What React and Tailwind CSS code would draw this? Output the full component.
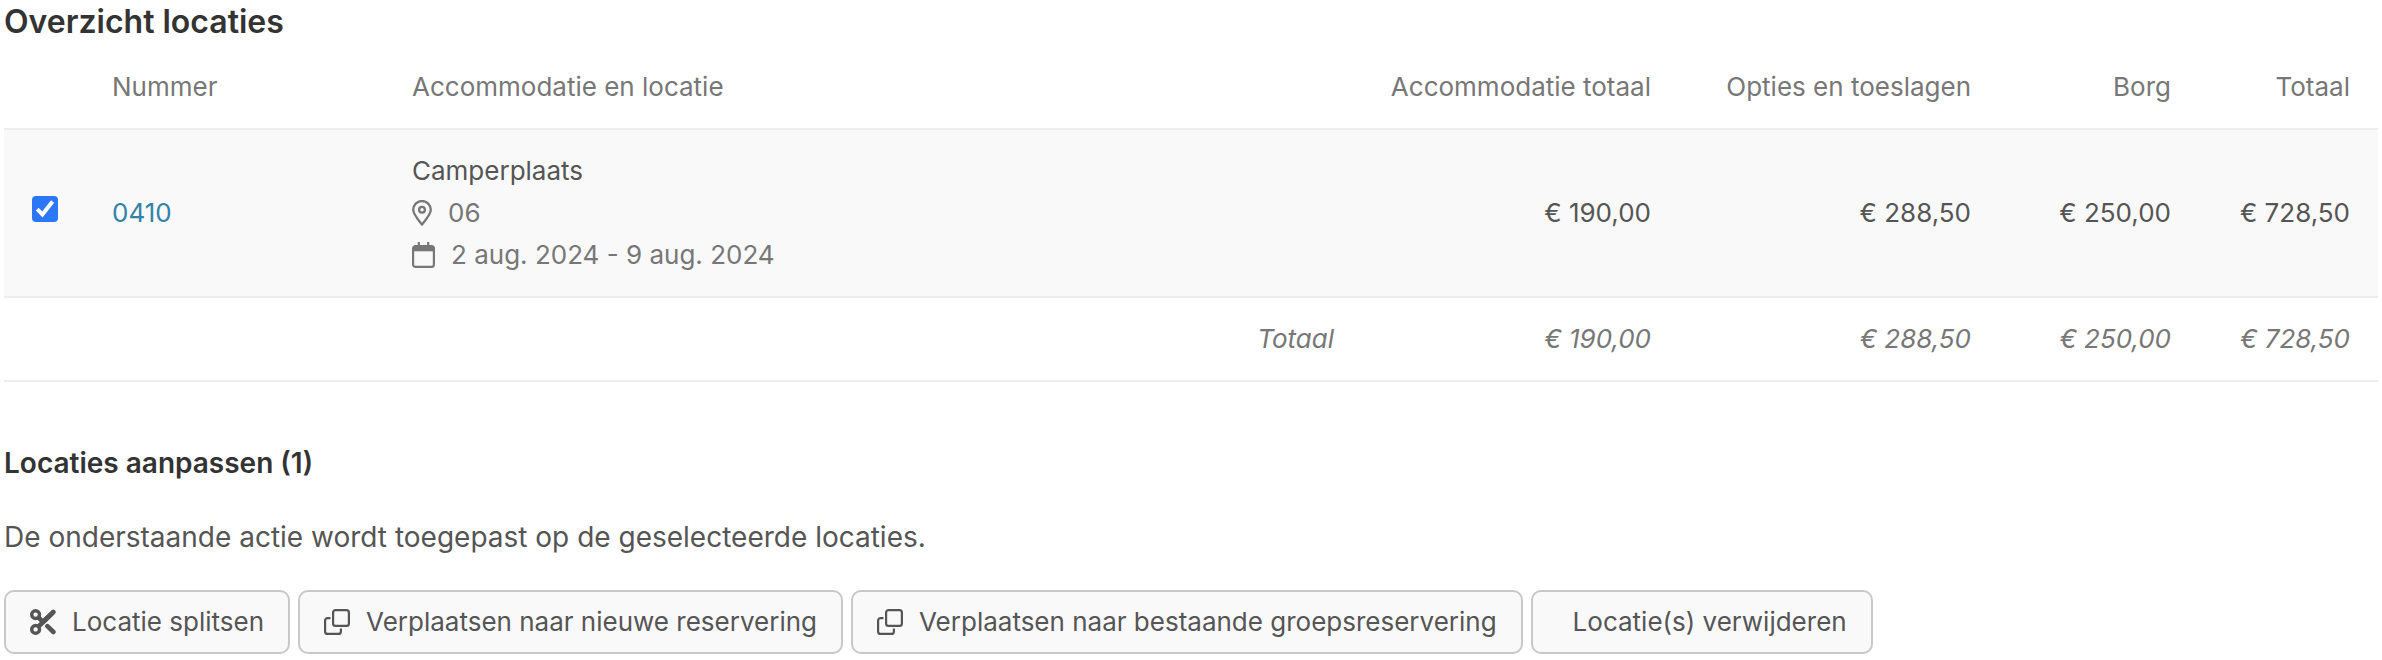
import React, { useState } from "react";

const amounts = ["€ 190,00", "€ 288,50", "€ 250,00", "€ 728,50"];

function ScissorsIcon() {
  return (
    <svg viewBox="0 0 26 26" className="size-[26px] shrink-0" fill="none" aria-hidden="true">
      <circle cx="5.6" cy="5.6" r="3.9" stroke="currentColor" strokeWidth="3.4" />
      <circle cx="5.6" cy="20.4" r="3.9" stroke="currentColor" strokeWidth="3.4" />
      <path d="M8.4 17.6 23.4 3M8.4 8.4l5 5" stroke="currentColor" strokeWidth="4.6" />
      <path d="M13 13 23.4 3M17.4 17.2l6 5.8" stroke="currentColor" strokeWidth="4.6" strokeLinecap="round" />
    </svg>
  );
}

function CloneIcon() {
  return (
    <svg viewBox="0 0 26 26" className="size-[26px] shrink-0" fill="none" stroke="currentColor" strokeWidth="2.2" aria-hidden="true">
      <rect x="9.1" y="1.1" width="15.8" height="15.8" rx="2.4" />
      <path d="M6.5 9.1H3.6a2.5 2.5 0 0 0-2.5 2.5v10.8a2.5 2.5 0 0 0 2.5 2.5h10.8a2.5 2.5 0 0 0 2.5-2.5V19.5" />
    </svg>
  );
}

function PinIcon() {
  return (
    <svg viewBox="0 0 20 26" className="h-[26px] w-5 shrink-0" fill="none" stroke="currentColor" strokeWidth="2.3" aria-hidden="true">
      <path d="M10 24.6C7.5 21.4 1.2 14.4 1.2 9.8a8.8 8.8 0 0 1 17.6 0c0 4.6-6.3 11.6-8.8 14.8Z" strokeLinejoin="round" />
      <circle cx="10" cy="9.8" r="2.9" />
    </svg>
  );
}

function CalendarIcon() {
  return (
    <svg viewBox="0 0 23 26" className="h-[26px] w-[23px] shrink-0" fill="none" stroke="currentColor" strokeWidth="2.2" aria-hidden="true">
      <rect x="1.1" y="4.1" width="20.8" height="20.8" rx="2.4" />
      <path d="M1.1 6.7h20.8" strokeWidth="5.2" />
      <path d="M6.8 0v5M16.2 0v5" />
    </svg>
  );
}

function ActionButton({ icon, children }) {
  return (
    <button
      type="button"
      className="flex h-16 items-center gap-4 rounded-[10px] border-2 border-[#c8c8c8] bg-[#f9f9f9] px-6 text-[#555]"
    >
      {icon}
      {children}
    </button>
  );
}

export default function App() {
  const [checked, setChecked] = useState(true);
  const th = "px-7 py-5 font-normal";
  return (
    <main className="bg-white px-1 pb-1.5 font-[Inter,sans-serif] text-[26px] leading-[42px] text-[#555]">
      <h2 className="mb-0.5 text-[32px] leading-[44px] font-semibold text-[#333]">Overzicht locaties</h2>
      <table className="w-full table-fixed border-collapse">
        <colgroup>
          <col className="w-20" />
          <col className="w-[300px]" />
          <col />
          <col className="w-[317px]" />
          <col className="w-80" />
          <col className="w-[200px]" />
          <col className="w-[179px]" />
        </colgroup>
        <thead>
          <tr className="border-b-2 border-[#ededed] text-[#777]">
            <td />
            <th className={`${th} text-left`}>Nummer</th>
            <th className={`${th} text-left`}>Accommodatie en locatie</th>
            <th className={`${th} text-right whitespace-nowrap`}>Accommodatie totaal</th>
            <th className={`${th} text-right whitespace-nowrap`}>Opties en toeslagen</th>
            <th className={`${th} text-right`}>Borg</th>
            <th className={`${th} text-right`}>Totaal</th>
          </tr>
        </thead>
        <tbody>
          <tr className="border-b-2 border-[#ededed] bg-[#f9f9f9]">
            <td className="pb-2 pl-7">
              <span className="grid size-[26px]">
                <input
                  type="checkbox"
                  aria-label="Selecteer 0410"
                  checked={checked}
                  onChange={() => setChecked(!checked)}
                  className="peer col-start-1 row-start-1 size-[26px] appearance-none rounded-[4px] border-2 border-[#767676] bg-white checked:border-[#2b77f7] checked:bg-[#2b77f7]"
                />
                <svg
                  viewBox="0 0 26 26"
                  className="pointer-events-none invisible col-start-1 row-start-1 size-[26px] peer-checked:visible"
                  fill="none"
                  stroke="#fff"
                  strokeWidth="4"
                  aria-hidden="true"
                >
                  <path d="M5.2 13.2l5.2 5.2L20.6 5.6" />
                </svg>
              </span>
            </td>
            <td className="px-7">
              <a href="#0410" className="text-[#3482a6]">0410</a>
            </td>
            <td className="px-7 py-5">
              <div>Camperplaats</div>
              <div className="flex items-center gap-4 text-[#777]">
                <PinIcon />
                06
              </div>
              <div className="flex items-center gap-4 text-[#777]">
                <CalendarIcon />
                2 aug. 2024 - 9 aug. 2024
              </div>
            </td>
            {amounts.map((a) => (
              <td key={a} className="px-7 text-right whitespace-nowrap">{a}</td>
            ))}
          </tr>
        </tbody>
        <tfoot>
          <tr className="border-b-2 border-[#ededed] text-[#777] italic">
            <th colSpan={3} className={`${th} text-right`}>Totaal</th>
            {amounts.map((a) => (
              <td key={a} className="px-7 py-5 text-right whitespace-nowrap">{a}</td>
            ))}
          </tr>
        </tfoot>
      </table>
      <h3 className="mt-[60px] text-[28px] leading-[42px] font-semibold text-[#333]">Locaties aanpassen (1)</h3>
      <p className="mt-8 text-[28px]">De onderstaande actie wordt toegepast op de geselecteerde locaties.</p>
      <div className="mt-8 flex flex-wrap gap-2">
        <ActionButton icon={<ScissorsIcon />}>Locatie splitsen</ActionButton>
        <ActionButton icon={<CloneIcon />}>Verplaatsen naar nieuwe reservering</ActionButton>
        <ActionButton icon={<CloneIcon />}>Verplaatsen naar bestaande groepsreservering</ActionButton>
        <ActionButton icon={<span />}>Locatie(s) verwijderen</ActionButton>
      </div>
    </main>
  );
}
